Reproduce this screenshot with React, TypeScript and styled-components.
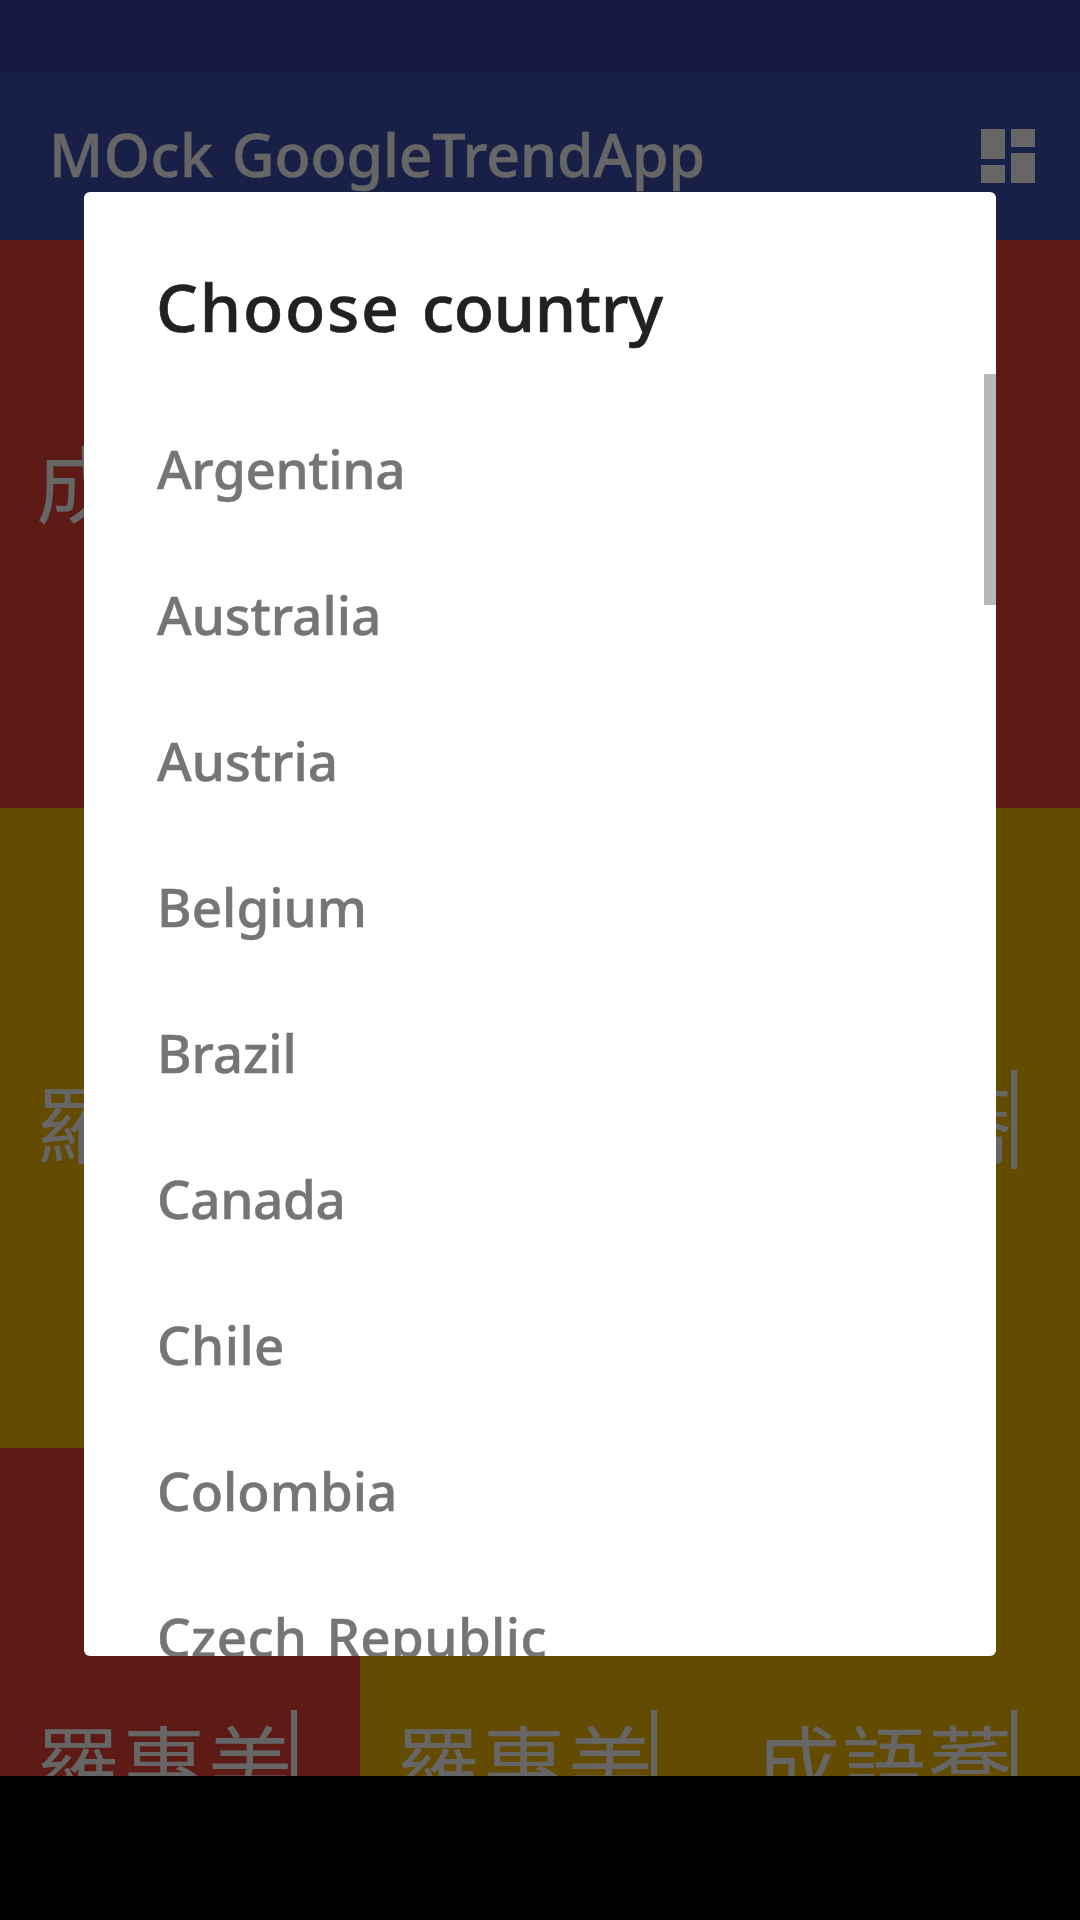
import React from 'react';
import styled, { createGlobalStyle } from 'styled-components';

const GlobalStyle = createGlobalStyle`
  * { box-sizing: border-box; }
  body { margin: 0; background: #000; }
`;

const Screen = styled.div`
  position: relative;
  display: flex;
  flex-direction: column;
  width: 1080px;
  height: 1920px;
  overflow: hidden;
  background: #000;
  font-family: "Noto Sans", "Noto Sans CJK TC", sans-serif;
  font-weight: 500;
`;

const StatusBar = styled.div`
  flex: none;
  height: 72px;
  background: #303f9f;
`;

const AppBar = styled.header`
  flex: none;
  display: flex;
  align-items: center;
  justify-content: space-between;
  height: 168px;
  padding: 0 36px 0 49px;
  background: #3f51b5;
  color: #fff;
`;

const AppTitle = styled.h1`
  margin: 0;
  padding-bottom: 4px;
  font-size: 59px;
  font-weight: 500;
  line-height: 80px;
  word-spacing: 2.5px;
  white-space: nowrap;
  -webkit-text-stroke: 0.5px currentColor;
`;

const Word = styled.span<{ $tracking: number }>`
  letter-spacing: ${p => p.$tracking}px;
`;

const DashboardIcon = styled.svg`
  width: 72px;
  height: 72px;
  fill: currentColor;
`;

const GridViewport = styled.main`
  flex: none;
  height: 1536px;
  overflow: hidden;
`;

const TrendGrid = styled.div`
  display: grid;
  grid-template-columns: repeat(3, 360px);
  grid-auto-rows: 640px;
  margin-top: -72px;
`;

const Tile = styled.div<{ $color: string }>`
  display: flex;
  align-items: center;
  padding-left: 36px;
  background: ${p => p.$color};
  color: #fff;
`;

const TrendText = styled.span`
  padding-bottom: 14px;
  font-family: "Noto Sans CJK TC", sans-serif;
  font-size: 84px;
  font-weight: 400;
  line-height: 120px;
  letter-spacing: 2px;
  white-space: nowrap;
`;

const Cursor = styled.span`
  width: 6px;
  height: 99px;
  margin: 0 0 17px -3px;
  background: currentColor;
`;

const Scrim = styled.div`
  position: absolute;
  inset: 0;
  display: flex;
  justify-content: center;
  align-items: flex-start;
  padding-top: 192px;
  background: rgba(0, 0, 0, 0.6);
`;

const Dialog = styled.section`
  display: flex;
  flex-direction: column;
  width: 912px;
  height: 1464px;
  overflow: hidden;
  border-radius: 6px;
  background: #fff;
`;

const DialogTitle = styled.h2`
  flex: none;
  height: 182px;
  margin: 0;
  padding: 70px 72px 0;
  color: #212121;
  font-size: 66px;
  font-weight: 500;
  line-height: 88px;
  word-spacing: 2px;
  white-space: nowrap;
  -webkit-text-stroke: 0.6px currentColor;
`;

const ListArea = styled.div`
  flex: 1;
  display: flex;
  align-items: flex-start;
  min-height: 0;
  overflow: hidden;
`;

const CountryList = styled.ul`
  flex: 1;
  margin: 0;
  padding: 22px 0 0 73px;
  list-style: none;
`;

const Country = styled.li<{ $tracking: number }>`
  height: 146px;
  color: #757575;
  font-size: 53px;
  line-height: 146px;
  letter-spacing: ${p => p.$tracking}px;
  word-spacing: 5px;
  white-space: nowrap;
  -webkit-text-stroke: 0.5px currentColor;
`;

const ScrollThumb = styled.div`
  flex: none;
  width: 12px;
  height: 231px;
  background: #b8b8b8;
`;

const RED = '#ea4335';
const YELLOW = '#fbbc05';

const tiles = [
  { color: RED, text: '成語蕎' },
  { color: RED },
  { color: RED },
  { color: YELLOW, text: '羅惠美' },
  { color: YELLOW },
  { color: YELLOW, text: '成語蕎' },
  { color: RED, text: '羅惠美' },
  { color: YELLOW, text: '羅惠美' },
  { color: YELLOW, text: '成語蕎' },
];

const countries = [
  { name: 'Argentina', tracking: -0.35 },
  { name: 'Australia', tracking: -0.05 },
  { name: 'Austria', tracking: 0 },
  { name: 'Belgium', tracking: 0 },
  { name: 'Brazil', tracking: -0.1 },
  { name: 'Canada', tracking: -0.4 },
  { name: 'Chile', tracking: 0.4 },
  { name: 'Colombia', tracking: 0 },
  { name: 'Czech Republic', tracking: 0.35 },
];

export default function App() {
  return (
    <Screen>
      <GlobalStyle />
      <StatusBar />
      <AppBar>
        <AppTitle>
          <Word $tracking={0.5}>MOck </Word>
          <Word $tracking={-0.1}>GoogleTrendApp</Word>
        </AppTitle>
        <DashboardIcon viewBox="0 0 24 24">
          <path d="M3 13h8V3H3v10zm0 8h8v-6H3v6zm10 0h8V11h-8v10zm0-18v6h8V3h-8z" />
        </DashboardIcon>
      </AppBar>
      <GridViewport>
        <TrendGrid>
          {tiles.map((tile, i) => (
            <Tile key={i} $color={tile.color}>
              {tile.text && (
                <>
                  <TrendText>{tile.text}</TrendText>
                  <Cursor />
                </>
              )}
            </Tile>
          ))}
        </TrendGrid>
      </GridViewport>
      <Scrim>
        <Dialog role="dialog">
          <DialogTitle>
            <Word $tracking={1.8}>Choose </Word>
            <Word $tracking={-0.35}>country</Word>
          </DialogTitle>
          <ListArea>
            <CountryList>
              {countries.map(c => (
                <Country key={c.name} $tracking={c.tracking}>{c.name}</Country>
              ))}
            </CountryList>
            <ScrollThumb />
          </ListArea>
        </Dialog>
      </Scrim>
    </Screen>
  );
}
